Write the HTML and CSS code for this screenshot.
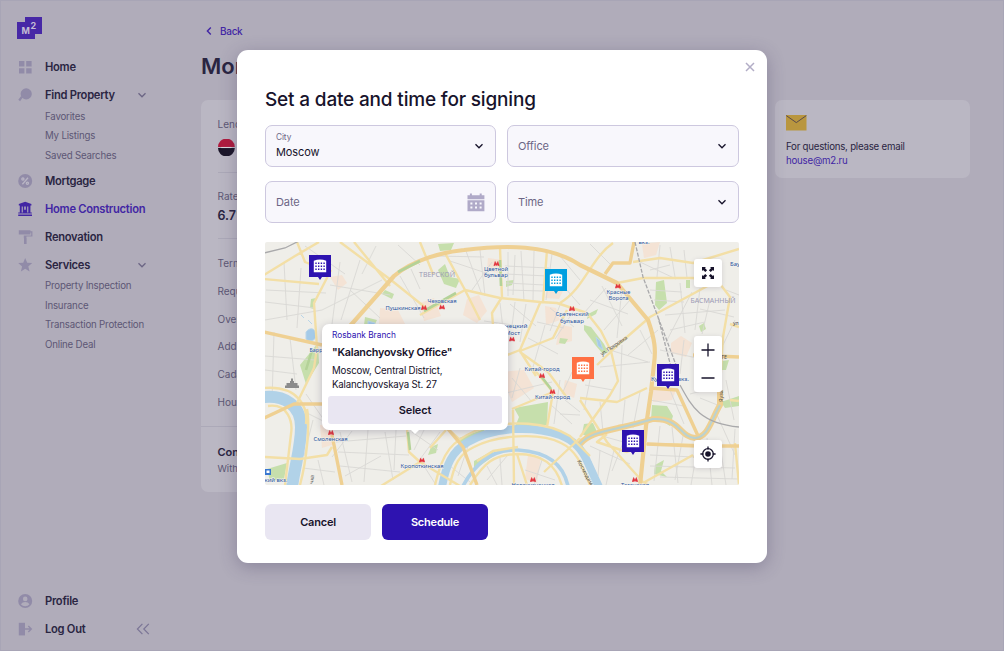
FILE: index.html
```html
<!DOCTYPE html>
<html lang="en">
<head>
<meta charset="utf-8">
<title>Set a date and time for signing</title>
<link rel="stylesheet" href="styles.css">
</head>
<body>
<svg class="defs" width="0" height="0">
  <symbol id="chev" viewBox="0 0 10 10"><path d="M1.5 3.2 5 6.8 8.5 3.2" fill="none" stroke="currentColor" stroke-width="1.3"/></symbol>
  <symbol id="pin" viewBox="0 0 22 25">
    <path d="M0 0h22v22h-9l-2 3-2-3H0z" fill="currentColor"/>
    <path d="M4.8 17.3V5.8Q11 3.2 17.2 5.8v11.5z" fill="#fff"/>
    <path d="M6.3 8.2h9.6M6.3 11.2h9.6M6.3 14.2h9.6" stroke="currentColor" stroke-width="1.4" stroke-dasharray="1.4 1.3"/>
  </symbol>
  <symbol id="metro" viewBox="0 0 6 5"><path d="M0 4.7 1.6.3 3 2.8 4.4.3 6 4.7H4.3L4 3.4 3 4.8 2 3.4 1.7 4.7z" fill="#e3353f" stroke="#e3353f" stroke-width=".3"/></symbol>
</svg>

<div class="app">
  <nav class="sidebar">
    <svg class="logo" width="26" height="23" viewBox="0 0 26 23"><path d="M0 5h8V0h17v17h-7v5H0z" fill="#4728a6"/><text x="4.5" y="16.6" class="logo-m">M</text><text x="13.6" y="11.6" class="logo-2">2</text></svg>
    <div class="nav-top">
      <a class="item"><svg width="16" height="16" viewBox="0 0 16 16"><path d="M2 2h5.4v5.4H2zM9.2 2h5.4v5.4H9.2zM2 9.2h5.4v5.4H2zM9.2 9.2h5.4v5.4H9.2z"/></svg><span>Home</span></a>
      <a class="item"><svg width="16" height="16" viewBox="0 0 16 16"><circle cx="9.2" cy="6.9" r="5.6"/><path d="M5 9.7 2.2 13.5" stroke="currentColor" stroke-width="2.2"/></svg><span>Find Property</span><svg class="tog" width="10" height="10"><use href="#chev"/></svg></a>
      <div class="subs"><a>Favorites</a><a>My Listings</a><a>Saved Searches</a></div>
      <a class="item"><svg width="16" height="16" viewBox="0 0 16 16"><circle cx="8.2" cy="8" r="7"/><g fill="none" stroke="#b9b5c4" stroke-width="1.3"><path d="m5.4 11.2 5.6-6.4"/><circle cx="5.9" cy="6" r="1.1"/><circle cx="10.4" cy="10.2" r="1.1"/></g></svg><span>Mortgage</span></a>
      <a class="item on"><svg width="16" height="16" viewBox="0 0 16 16"><path d="M8.2.8 14.4 3v1.6h-1v7h1.4v1H1.2v-1h1.6v-7h-1V3zM1.2 13.4h13.8V15H1.2zM4.7 5.4v6h1.1v-6zm2.5 0v3.4h1.6V5.4zm3 0v6h1.1v-6z" fill-rule="evenodd"/></svg><span>Home Construction</span></a>
      <a class="item"><svg width="16" height="16" viewBox="0 0 16 16"><path d="M1.8 1.2h11.6v4.4H1.8zM13.4 2.2h2v5.2h-6v1.8H6.8V6.4h7.4V3.6h-.8zM7 9h2.6v6H7z"/></svg><span>Renovation</span></a>
      <a class="item"><svg width="16" height="16" viewBox="0 0 16 16"><path d="m8.2.9 2 4.8 5 .4-3.9 3.3 1.3 5-4.4-2.7-4.3 2.7 1.2-5L1.2 6.1l5-.4z"/></svg><span>Services</span><svg class="tog" width="10" height="10"><use href="#chev"/></svg></a>
      <div class="subs"><a>Property Inspection</a><a>Insurance</a><a>Transaction Protection</a><a>Online Deal</a></div>
    </div>
    <div class="nav-bottom">
      <a class="item"><svg width="16" height="16" viewBox="0 0 16 16"><circle cx="8.2" cy="8" r="7"/><circle cx="8.2" cy="5.9" r="2.3" fill="#b0acba"/><path d="M3.9 11.3q1.4-2.2 4.3-2.2t4.3 2.2q-1.5 2-4.3 2t-4.3-2z" fill="#b0acba"/></svg><span>Profile</span></a>
      <a class="item"><svg width="16" height="16" viewBox="0 0 16 16"><path d="M1.8 1.8h6.2v12.6H1.8z"/><path d="M8 8h6M11.3 5 14.3 8l-3 3" fill="none" stroke="currentColor" stroke-width="1.4"/></svg><span>Log Out</span><svg class="fold" width="14" height="12" viewBox="0 0 14 12"><path d="M6.4.8 1.4 6l5 5.2M12.8.8l-5 5.2 5 5.2" fill="none" stroke="currentColor" stroke-width="1.2"/></svg></a>
    </div>
  </nav>

  <main class="page">
    <a class="back"><svg width="8" height="10" viewBox="0 0 8 10"><path d="M5.8 1.6 2.4 5l3.4 3.4" fill="none" stroke="currentColor" stroke-width="1.4"/></svg>Back</a>
    <h1>Mortgage</h1>
    <div class="cols">
      <section class="card deal">
        <div class="lender"><p>Lender</p><svg width="17" height="17" viewBox="0 0 17 17"><path d="M0 8a8.4 8.4 0 0 1 16.8 0z" fill="#af1b3e"/><path d="M0 9a8.4 8.4 0 0 0 16.8 0z" fill="#1a1528"/><path d="M3.2 8.5h10.4" stroke="#dcd8de" stroke-width="1.1"/></svg></div>
        <div class="rate"><p>Rate</p><b>6.7%</b></div>
        <div class="rows"><p>Term</p><p>Required</p><p>Overpay</p><p>Address</p><p>Cadastral</p><p>House</p></div>
        <div class="foot"><b>Contract</b><p>Without</p></div>
      </section>
      <aside class="card help">
        <svg width="21" height="16" viewBox="0 0 21 16"><path d="M0 0h20.5v15.5H0z" fill="#b9963f"/><path d="m.3.6 10 7 10-7" fill="none" stroke="#5a4a4c" stroke-width="1"/></svg>
        <p>For questions, please email</p><a>house@m2.ru</a>
      </aside>
    </div>
  </main>
</div>

<div class="modal">
  <svg class="close" width="10" height="10" viewBox="0 0 10 10"><path d="m1 1 8 8M9 1 1 9" stroke="#b2adc6" stroke-width="1.5"/></svg>
  <h2>Set a date and time for signing</h2>
  <div class="fields">
    <div class="field"><div><small>City</small><span class="val">Moscow</span></div><svg width="10" height="10"><use href="#chev"/></svg></div>
    <div class="field"><span>Office</span><svg width="10" height="10"><use href="#chev"/></svg></div>
    <div class="field"><span>Date</span><svg class="cal" width="18" height="19" viewBox="0 0 18 19"><path d="M.5 2.2h2.4V.6h2v1.6h7.8V.6h2v1.6h2.7v4H.5zM.5 7.2h16.9v11H.5z" fill="#b0aac8"/><path d="M3.4 10.5h12M3.4 14.6h12" stroke="#f8f7fc" stroke-width="2" stroke-dasharray="2 2.6"/></svg></div>
    <div class="field"><span>Time</span><svg width="10" height="10"><use href="#chev"/></svg></div>
  </div>

  <div class="map">
    <svg class="tiles" width="474" height="243" viewBox="265 242 474 243">
      <rect x="265" y="242" width="474" height="243" fill="#efeee9"/>
      <g fill="#f5dfcd" opacity=".75">
        <path d="M330 277l12-2 5 8-9 7zM380 308l18 2 7 14h-26zM467 299l12-4 8 16-10 12-14-8zM548 283l16 6-5 10-14-1zM545 306l11 2 4 12-14 5zM500 372l24-2 10 18-22 14zM560 325l12 2 0 14-16 4zM642 244l18-2-4 13-12 3zM671 343l10-7 11 7-6 14-15-4zM652 389l24 1-4 10-19 2zM528 455l13 2-4 26-12-4zM320 425l12-1 3 20-13 4zM696 264l12 6v14l-14-3zM488 258l14 2-2 13-13-2zM565 380l12 4-3 14-11-5zM420 303l14-5 7 18-17 5z"/>
      </g>
      <g fill="#c6dfac">
        <path d="M438 244l16-1-3 7-11 1zM438 270l7-6 5 13 10 2-4 9-12-4zM385 290l9 4-2 5-10-5zM311 299l5-1-2 11-4-1zM514 408l34-6-1 23-32 2 4-10zM656 282l8-2 3 23-8 7-4-5zM474 461l18-10 3 4-21 15zM584 424l9-1 4 9-9 5-6-3zM652 405l15 1 6 10-3 10-8-5-11-1zM655 465l9-5-3 11 6 6-13-3zM715 362l14-2-3 10-8 0zM300 365l18-22 1 20-13 21zM365 317l12 3-5 10-8-5zM459 438l28-10-7 7-20 8zM721 402l18-6v10l-14 2zM267 469l20-6-3 16-14 2zM506 281l8-1-2 5-6 2zM588 314l10-5-2 5-9 5zM699 326l5-3 2 6-5 3zM686 280h4v8h-4zM431 447l7-3-2 9-8 2zM584 325l7 2 13 17 4 8-5 2-7-8-12-16zM560 338l8 1-3 5-6-1z"/>
      </g>
      <g fill="none" stroke="#d9d8d5" stroke-width=".9">
        <path d="M266 290l60 3M265 302l50 6M284 262l3 58M301 268l-4 60M265 320l57-10M274 332l-2 70M290 338l6 52M265 356l50 4M265 370l32 4M330 285l60 10M340 262l-9 70M360 260l-19 60M322 310l60-30M350 290l30 28M305 246l40 28M376 246l-14 28M398 245l22 20M400 276l24 42M411 269l9 20"/>
        <path d="M436 256l48 1M450 261l42 14M466 251l16 44M480 250l5 46M492 262l-20 28M508 252v44M515 255l-2 40M505 266l44 2M505 274l43 2M506 283l39 2M507 290l36 1M521 251l3 50M534 251l-1 49M552 254l-6 46M560 256l20 24M565 288l15 17M510 304l26 22M500 303l3 26M515 302l-3 24M526 304l-6 38M484 321l36 5M550 308l24 19M560 305l-10 26M575 309l-20 30M537 322l27 6M528 338l30 16M545 325l-12 42"/>
        <path d="M590 244l22 22M640 262l36 17M660 245l-3 32M670 247l5 30M684 250l3 28M650 270l20-5M602 286l20 40M590 300l38 14M584 313l22-25M622 288l-5 50M630 300l-26 30M650 290l32 2M654 300l30 2M680 283l5 50M692 292l-27 52M700 288l-5 42M665 315l60-5M670 330l35-8M710 300l-8 34M658 330l-30 25M640 330l12 24M610 350l38 12M600 367l50-5M622 345l-2 55M684 340l-4 34M660 350l37 8M726 290l13 5M700 309l34 8M735 320l-12 25"/>
        <path d="M306 394l18 26M305 412l20 10M313 420l-9 36M340 432l12 50M352 431l-20 26M368 430l-4 52M385 432l8 48M396 430l-2 40M336 442l70-6M338 452l71 3M340 466l60 6M345 476l36-20M318 460l6 25M303 468l32 4M412 432l26 18M425 428l-11 22M440 432l-22 30M424 466l12 19M450 466l20 16M468 446l-10 30M500 458l2 27M487 466l10 19M507 456l-20 24M525 470l30 10M542 460l-8 25M512 378l20 24M502 394l50-12M520 368l-8 30M560 380l-6 44M565 400l15 12M550 404l22 20M560 414l20 1M572 372l-10 22"/>
        <path d="M585 385l28 5M592 370l-8 40M600 402l3 30M625 400l-3 30M640 392l-7 36M595 434l50 14M590 446l40 18M600 450l-2 26M614 450l-8 35M626 435l-14 36M650 400l34 6M670 390l14 34M660 426l-6 55M672 427l6 56M683 436l-8 44M650 455l44 2M650 466l85 2M660 477l79 2M698 445l-7 40M707 438l5 47M717 415l18 40M700 398l20 8M690 394l30-8M726 380l8 40M720 445l6 40M735 429l-3 50"/>
      </g>
      <g fill="none" stroke="#b1d2e8">
        <path d="M264 397c20-2 37 8 37 30 0 20-6 38-9 60" stroke-width="12"/>
        <path d="M442 487c4-22 10-36 26-45 28-16 66-16 92-7 16 6 24 18 28 28l11 24" stroke-width="8"/>
        <path d="M463 486c14-26 32-37 55-36 30 2 45 14 50 36" stroke-width="3.6"/>
      </g>
      <path d="M306 332c4-5 9-4 10 2s-6 9-10 5zM368 321l7 2-2 5-5-3zM596 337l4 4 3 9-5-4zM301 315l3 3M308 320l4 4" fill="#a4cae8" stroke="#b9d5e8" stroke-width="1"/>
      <g fill="none" stroke="#f3dfa6" stroke-width="2.4" stroke-linejoin="round">
        <path d="M264 275l31-19 24-14M297 242l8 20 20 8M264 279l55 5M340 242l51 38 35 28M354 242l36 44M420 242l13 32M445 253l20 37 15 30M500 248l2 49-10 16 1 12M331 270l-17 33 3 45-3 20-17 35"/>
        <path d="M420 315l45-25 35 8 40 4 17 1 30 10 14 18 10 20 7 30-8 14-30 42M543 302l4-52M540 303l-20 47-18 7M560 303c24-14 31-45 53-60M567 310l-14 28-33 13 16 25M520 352l28 20 20 27M633 262l27-4 33 5 46-14M617 283l26-5h50l10 2M713 283l-63 34-30 26-23 22M717 280l13 17-7 40-3 50M730 324l9 3"/>
        <path d="M307 409c3 15 0 50-7 76M264 388c35-3 44 20 42 36M268 406c20-3 25 16 23 28l-6 51M264 457l36 2 27-4 5-8M407 429l2 23 11 10-39 24M420 462l40 24M448 429l12 11M430 448l16-18M435 485c8-35 18-44 40-54 36-13 74-8 95 5l20 20M450 485c4-20 9-31 24-38 23-12 66-15 87-4 17 8 22 26 29 42M470 485c14-22 24-31 48-31s38 10 44 32M477 461l16-10 25-4M513 410l1 75M553 392l-6 35M533 368l20 24-41 17M580 438l-36 34M517 454l10 31"/>
        <path d="M580 398l37 4 30-14M580 400l27 42 36 40 5 2M607 434l-10 8 30 10 20-8M647 444l50 1M693 455l-50 28M735 443l4 42M730 400l9 1M648 422l-30 4"/>
      </g>
      <g fill="none" stroke="#efd092" stroke-width="3.4" stroke-linejoin="round">
        <path d="M350 326l44-50c20-17 50-24 70-26 40-5 85-6 116 15l37 18 31 37c7 20 8 30 6 44l-3 28-5 34-6 60" stroke-width="4.2"/>
        <path d="M264 332l58 13M264 418l30-14h40M332 435l10 50M448 429l15 18 14 38M605 274l8-11h17l4-21M650 388l27 2 22 48-4 20M647 444l50 2 42 0M693 355l46 2"/>
        <path d="M580 444c12-14 30-12 73-25 28-1 26 18 42 19 14-2 15-16 25-33V390" stroke-width="6"/>
      </g>
      <path d="M580 444c12-14 30-12 73-25 28-1 26 18 42 19 14-2 15-16 25-33" fill="none" stroke="#b9d2d2" stroke-width="2"/>
      <g fill="none" stroke="#b4d298" stroke-width="2.6"><path d="M398 272l22-11M424 311l32-18M500 260l1 26M408 432l2 18M541 376l10 13M312 350l-6 20"/></g>
      <g fill="none" stroke="#a9a9ab" stroke-width="1.3"><path d="M264 253l21-5 14-7M680 385c12 22 20 38 59 42"/><path d="M635 242l8 35 15 40 13 50M658 317l18 48" stroke-dasharray="4 1.5"/></g>
      <path d="M285 388v-2.5h1.5V383h3.5v-2h1v-2.6h2V381h1v2h3.500v2.500h1.500v2.500z" fill="#8b8b8b"/>
      <path d="M265 469h6v6h-6z" fill="#3977cf"/><path d="M266.500 470.500h3v2.500h-3z" fill="#fff"/>
      <g><use href="#metro" x="493.500" y="261" width="6" height="5"/><use href="#metro" x="421" y="305" width="6" height="5"/><use href="#metro" x="439" y="304.500" width="6" height="5"/><use href="#metro" x="509" y="336.500" width="6" height="5"/><use href="#metro" x="569" y="306" width="6" height="5"/><use href="#metro" x="615" y="283.500" width="6" height="5"/><use href="#metro" x="539" y="373" width="6" height="5"/><use href="#metro" x="549.500" y="389" width="6" height="5"/><use href="#metro" x="328" y="430" width="6" height="5"/><use href="#metro" x="419" y="457.500" width="6" height="5"/><use href="#metro" x="530" y="477" width="6" height="5"/><use href="#metro" x="632" y="477" width="6" height="5"/></g>
      <g class="place">
        <text x="496" y="270.700" textLength="24" lengthAdjust="spacingAndGlyphs">Цветной</text><text x="496" y="277.300" textLength="24" lengthAdjust="spacingAndGlyphs">бульвар</text>
        <text x="442" y="302.500" textLength="29" lengthAdjust="spacingAndGlyphs">Чеховская</text><text x="403" y="309.700" textLength="35" lengthAdjust="spacingAndGlyphs">Пушкинская</text>
        <text x="511" y="328" textLength="33" lengthAdjust="spacingAndGlyphs">Кузнецкий</text><text x="512.500" y="334.500" textLength="15" lengthAdjust="spacingAndGlyphs">Мост</text>
        <text x="572" y="316.300" textLength="33" lengthAdjust="spacingAndGlyphs">Сретенский</text><text x="572" y="323" textLength="24" lengthAdjust="spacingAndGlyphs">бульвар</text>
        <text x="618.500" y="293.700" textLength="24" lengthAdjust="spacingAndGlyphs">Красные</text><text x="618.500" y="300.300" textLength="20" lengthAdjust="spacingAndGlyphs">Ворота</text>
        <text x="542" y="371" textLength="35" lengthAdjust="spacingAndGlyphs">Китай-город</text><text x="552.500" y="399" textLength="35" lengthAdjust="spacingAndGlyphs">Китай-город</text>
        <text x="330.500" y="440.500" textLength="34" lengthAdjust="spacingAndGlyphs">Смоленская</text><text x="422" y="467.500" textLength="43" lengthAdjust="spacingAndGlyphs">Кропоткинская</text>
        <text x="276" y="482" textLength="23" lengthAdjust="spacingAndGlyphs">кий вкз.</text><text x="533" y="487.300" textLength="43" lengthAdjust="spacingAndGlyphs">Новокузнецкая</text><text x="635" y="487.300" textLength="28" lengthAdjust="spacingAndGlyphs">Таганская</text>
        <text x="670" y="381" textLength="38" lengthAdjust="spacingAndGlyphs">Курский вкз.</text><text x="316" y="351.500" textLength="13" lengthAdjust="spacingAndGlyphs">Барр</text><text x="735" y="266" textLength="10" lengthAdjust="spacingAndGlyphs">Бау</text><text x="644" y="243.600" textLength="11" lengthAdjust="spacingAndGlyphs">вкз.</text>
      </g>
      <g class="area"><text x="437" y="277" textLength="36" lengthAdjust="spacingAndGlyphs">ТВЕРСКОЙ</text><text x="713" y="303.300" textLength="45" lengthAdjust="spacingAndGlyphs">БАСМАННЫЙ</text></g>
      <g class="street"><text transform="translate(602 356) rotate(-34)" textLength="31">ул. Покровка</text><text x="733" y="325">ул</text><text transform="translate(723 402) rotate(-90)">Яуза</text><text transform="translate(313 484) rotate(-82)">чка</text><text transform="translate(577 461) rotate(62)" textLength="28">Космодам</text><text x="721" y="359">ТЕ</text></g>
    </svg>
    <svg class="pin p1" width="22" height="25"><use href="#pin"/></svg>
    <svg class="pin p2" width="22" height="25"><use href="#pin"/></svg>
    <svg class="pin p3" width="22" height="25"><use href="#pin"/></svg>
    <svg class="pin p4" width="22" height="25"><use href="#pin"/></svg>
    <svg class="pin p5" width="22" height="25"><use href="#pin"/></svg>

    <div class="popup">
      <p class="tag">Rosbank Branch</p>
      <h3>"Kalanchyovsky Office"</h3>
      <p class="addr">Moscow, Central District,<br>Kalanchyovskaya St. 27</p>
      <button>Select</button>
    </div>

    <div class="ctl full"><svg width="14" height="14" viewBox="0 0 14 14"><path d="M1 1h4L3.900 2.100l2.200 2.200-1.800 1.800-2.200-2.200L1 5zM13 1v4l-1.100-1.100-2.200 2.200-1.800-1.800 2.200-2.200L9 1zM1 13V9l1.100 1.100 2.200-2.200 1.800 1.800-2.200 2.200L5 13zM13 13H9l1.100-1.100-2.200-2.200 1.800-1.800 2.200 2.200L13 9z" fill="#17132b"/></svg></div>
    <div class="ctl zoom"><svg width="14" height="14" viewBox="0 0 14 14"><path d="M.5 7h13M7 .5v13" stroke="#17132b" stroke-width="1.3"/></svg><svg width="14" height="14" viewBox="0 0 14 14"><path d="M.5 7h13" stroke="#17132b" stroke-width="1.3"/></svg></div>
    <div class="ctl locate"><svg width="16" height="16" viewBox="0 0 16 16"><circle cx="8" cy="8" r="5.300" fill="none" stroke="#17132b" stroke-width="1.3"/><circle cx="8" cy="8" r="2.800" fill="#17132b"/><path d="M8 .4v3M8 12.600v3M.4 8h3M12.600 8h3" stroke="#17132b" stroke-width="1.3"/></svg></div>
  </div>

  <div class="actions"><button>Cancel</button><button class="go">Schedule</button></div>
</div>
</body>
</html>
```

FILE: styles.css
```css
* { box-sizing: border-box; margin: 0; padding: 0; }
body { width: 1004px; height: 651px; overflow: hidden; position: relative; font-family: Inter, "Liberation Sans", sans-serif; color: #17132b; background: #b0acba; }
svg { display: block; flex: none; }
.defs { position: absolute; }
button { border: 0; font: inherit; color: inherit; }

.app { display: flex; height: 651px; border: 1px solid #a8a5b6; color: #2a2542; }
.sidebar { width: 200px; padding: 16px 0 7px 16px; display: flex; flex-direction: column; }
.logo-m { font: 700 9px Inter, sans-serif; fill: #c3bdd4; }
.logo-2 { font: 700 9px Inter, sans-serif; fill: #c3bdd4; }
.nav-top { padding-top: 13.5px; flex: 1; }
.item { display: flex; align-items: center; height: 27.9px; font-size: 11.2px; font-weight: 600; letter-spacing: -.28px; }
.item svg { fill: #918ba8; color: #918ba8; }
.item span { width: 93px; margin-left: 12px; white-space: nowrap; }
.item.on, .item.on svg { color: #4226a4; }
.item.on svg { fill: #4226a4; }
.item .tog { color: #6c6685; fill: none; margin-left: -1px; }
.item .fold { color: #7b7596; margin-left: -2px; }
.subs { display: flex; flex-direction: column; padding-left: 28px; margin: -2.5px 0 1.8px; font-size: 9.7px; letter-spacing: -.19px; color: #5d5775; }
.subs a { height: 19.5px; line-height: 19.5px; white-space: nowrap; }

.page { flex: 1; }
.back { display: flex; align-items: center; gap: 7px; height: 14px; margin: 23px 0 0 4px; font-size: 10px; font-weight: 500; letter-spacing: -.3px; color: #4226a4; }
h1 { height: 28px; line-height: 28px; margin-top: 14px; font-size: 22px; font-weight: 600; }
.cols { display: flex; align-items: flex-start; justify-content: space-between; width: 769px; margin-top: 20px; }
.card { background: #bab7c3; border-radius: 7px; }
.deal { width: 558px; height: 392px; color: #5d5775; font-size: 10px; }
.deal b { color: #2a2542; }
.lender { margin: 0 16.5px; padding-top: 17px; height: 73px; border-bottom: 1px solid #aca9b8; }
.lender p { height: 22px; line-height: 15px; }
.rate { margin: 0 16.5px; padding-top: 16px; height: 66px; border-bottom: 1px solid #aca9b8; }
.rate p { line-height: 15px; }
.rate b { font-size: 12.5px; line-height: 23px; font-weight: 600; }
.rows { padding: 11px 16.5px; height: 188px; border-bottom: 1px solid #aca9b8; }
.rows p { height: 27.8px; line-height: 27.8px; }
.foot { padding: 17px 16.5px; }
.foot b { display: block; font-size: 11px; line-height: 17px; font-weight: 600; }
.foot p { line-height: 16px; font-size: 9.5px; }
.help { width: 195px; height: 78px; padding: 15px 11px; font-size: 9.7px; line-height: 14px; letter-spacing: -.23px; }
.help svg { margin-bottom: 9px; }
.help a { display: block; color: #4226a4; }

.modal { position: absolute; left: 237px; top: 50px; width: 530px; height: 513px; padding: 36px 28px 0; background: #fff; border-radius: 11px; box-shadow: 0 4px 18px rgba(60, 50, 90, .32); }
.close { position: absolute; right: 12px; top: 12px; }
h2 { height: 28px; line-height: 28px; font-size: 19px; font-weight: 500; letter-spacing: -.17px; white-space: nowrap; }
.fields { display: grid; grid-template-columns: 231px 232px; gap: 14px 11px; margin-top: 11px; }
.field { display: flex; align-items: center; justify-content: space-between; height: 42px; padding: 0 11px 0 10px; border: 1px solid #cdc8df; border-radius: 7px; background: #f8f7fc; font-size: 11px; letter-spacing: -.1px; color: #6c6685; }
.field svg { color: #17132b; }
.field small { display: block; font-size: 8.3px; line-height: 11px; padding-top: 1px; }
.field .val { display: block; line-height: 17px; padding-top: 1px; color: #17132b; }
.field .cal { margin-right: -1px; }

.map { position: relative; width: 474px; height: 243px; margin-top: 19px; overflow: hidden; border-radius: 2px; }
.place, .area { text-anchor: middle; }
.place { font: 6px "Noto Sans", sans-serif; fill: #29539d; }
.place text { paint-order: stroke; stroke: #f4f3ef; stroke-width: .8px; }
.area { font: 6.8px "Noto Sans", sans-serif; fill: #9c9bb5; }
.street { font: 5.4px "Noto Sans", sans-serif; fill: #555; }
.pin { position: absolute; color: #2e13b0; }
.p1 { left: 44px; top: 13px; }
.p2 { left: 280px; top: 27px; color: #009fe0; }
.p3 { left: 307px; top: 115px; color: #ff7043; }
.p4 { left: 392px; top: 122px; }
.p5 { left: 357px; top: 188px; }

.popup { position: absolute; left: 57px; top: 82px; width: 186px; height: 106px; padding: 4px 6px 0; background: #fff; border-radius: 7px; box-shadow: 0 2px 8px rgba(40, 30, 70, .25); }
.popup::after { content: ""; position: absolute; left: 88px; top: 105px; border: 5px solid transparent; border-top-color: #fff; border-bottom: 0; }
.popup p, .popup h3 { margin-left: 4px; white-space: nowrap; }
.tag { font-size: 8.3px; line-height: 14px; color: #2e13b0; }
.popup h3 { font-size: 10.8px; font-weight: 600; line-height: 22px; letter-spacing: -.22px; }
.addr { font-size: 9.7px; line-height: 14px; letter-spacing: -.17px; }
.popup button { display: block; width: 174px; height: 28px; margin: 4px 0 0; border-radius: 3px; background: #e9e6f2; font-size: 11px; font-weight: 600; letter-spacing: -.15px; }

.ctl { position: absolute; left: 429px; width: 28px; height: 28px; display: grid; place-items: center; background: #fff; border-radius: 3px; box-shadow: 0 1px 5px rgba(40, 30, 70, .15); }
.full { top: 17px; }
.zoom { top: 94px; height: 56px; }
.locate { top: 198px; }

.actions { display: flex; gap: 11px; margin-top: 19px; }
.actions button { width: 106px; height: 36px; border-radius: 6px; background: #e9e6f2; font-size: 11px; font-weight: 600; letter-spacing: -.2px; }
.actions .go { background: #2e13b0; color: #fff; }
```
